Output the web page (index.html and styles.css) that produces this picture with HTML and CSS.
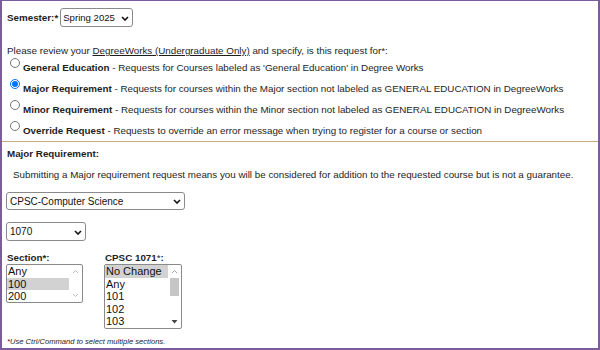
FILE: index.html
```html
<!DOCTYPE html>
<html lang="en">
<head>
    <meta charset="UTF-8">
    <title>Override Request</title>
    <link rel="stylesheet" href="styles.css">
</head>
<body>
    <div class="frame">
        <div class="row semester">
            <label class="bold" for="semester">Semester:*</label>
            <span class="pick">
                <select id="semester" class="sel sel-semester">
                    <option>Spring 2025</option>
                </select>
                <svg class="chev" width="8" height="5" viewBox="0 0 8 5"><path d="M1 1 L4 4 L7 1" fill="none" stroke="#111" stroke-width="1.6"/></svg>
            </span>
        </div>

        <p class="intro">Please review your <a href="#">DegreeWorks (Undergraduate Only)</a> and specify, is this request for*:</p>

        <div class="choices">
            <label class="choice"><input type="radio" name="kind"><b>General Education</b> - Requests for Courses labeled as 'General Education' in Degree Works</label>
            <label class="choice"><input type="radio" name="kind" checked><b>Major Requirement</b> - Requests for courses within the Major section not labeled as GENERAL EDUCATION in DegreeWorks</label>
            <label class="choice"><input type="radio" name="kind"><b>Minor Requirement</b> - Requests for courses within the Minor section not labeled as GENERAL EDUCATION in DegreeWorks</label>
            <label class="choice"><input type="radio" name="kind"><b>Override Request</b> - Requests to override an error message when trying to register for a course or section</label>
        </div>

        <div class="major">
            <h2 class="bold">Major Requirement:</h2>
            <p class="note">Submitting a Major requirement request means you will be considered for addition to the requested course but is not a guarantee.</p>

            <span class="pick pick-subject">
                <select class="sel sel-subject">
                    <option>CPSC-Computer Science</option>
                </select>
                <svg class="chev" width="8" height="5" viewBox="0 0 8 5"><path d="M1 1 L4 4 L7 1" fill="none" stroke="#111" stroke-width="1.6"/></svg>
            </span>
            <span class="pick pick-course">
                <select class="sel sel-course">
                    <option>1070</option>
                </select>
                <svg class="chev" width="8" height="5" viewBox="0 0 8 5"><path d="M1 1 L4 4 L7 1" fill="none" stroke="#111" stroke-width="1.6"/></svg>
            </span>

            <div class="lists">
                <div class="list-group">
                    <label>Section*:</label>
                    <div class="listbox list-section" role="listbox">
                        <div class="options">
                            <div class="opt">Any</div>
                            <div class="opt picked">100</div>
                            <div class="opt">200</div>
                        </div>
                        <div class="scrollbar">
                            <svg class="arrow" width="7" height="5" viewBox="0 0 7 5"><path d="M1 4 L3.5 1.5 L6 4" fill="none" stroke="#b9b9b9" stroke-width="1"/></svg>
                            <div class="track"></div>
                            <svg class="arrow" width="7" height="5" viewBox="0 0 7 5"><path d="M1 1 L3.5 3.5 L6 1" fill="none" stroke="#b9b9b9" stroke-width="1"/></svg>
                        </div>
                    </div>
                </div>
                <div class="list-group">
                    <label>CPSC 1071<span class="star">*</span>:</label>
                    <div class="listbox list-alt" role="listbox">
                        <div class="options">
                            <div class="opt picked">No Change</div>
                            <div class="opt">Any</div>
                            <div class="opt">101</div>
                            <div class="opt">102</div>
                            <div class="opt">103</div>
                        </div>
                        <div class="scrollbar">
                            <svg class="arrow" width="7" height="5" viewBox="0 0 7 5"><path d="M1 4 L3.5 1.5 L6 4" fill="none" stroke="#a8a8a8" stroke-width="1"/></svg>
                            <div class="track"><div class="thumb"></div></div>
                            <svg class="arrow" width="7" height="5" viewBox="0 0 7 5"><path d="M0.5 1 L6.5 1 L3.5 4.5 Z" fill="#444"/></svg>
                        </div>
                    </div>
                </div>
            </div>

            <p class="hint">*Use Ctrl/Command to select multiple sections.</p>
        </div>
    </div>
</body>
</html>
```

FILE: styles.css
```css
html, body {
    margin: 0;
    padding: 0;
}

body {
    width: 600px;
    height: 350px;
    font-family: Arial, "Liberation Sans", sans-serif;
    font-size: 9.8px;
    line-height: 13px;
    color: #1e1e1e;
    background: #fff;
}

.frame {
    box-sizing: border-box;
    width: 600px;
    height: 350px;
    border: 2px solid #7b5c9c;
    border-top-width: 1px;
    overflow: hidden;
    padding: 7px 0 0 4px;
}

.bold {
    font-weight: bold;
}

.row {
    display: flex;
    align-items: center;
    gap: 2px;
    height: 19px;
    padding-left: 1px;
}

/* selects with a drawn chevron */
.pick {
    position: relative;
    display: inline-block;
}

.pick-subject,
.pick-course {
    display: block;
    width: max-content;
}

.chev {
    position: absolute;
    right: 4px;
    top: 50%;
    margin-top: -2px;
    pointer-events: none;
}

.sel {
    appearance: none;
    -webkit-appearance: none;
    display: block;
    box-sizing: border-box;
    font-family: Arial, "Liberation Sans", sans-serif;
    font-size: 10px;
    color: #111;
    height: 19px;
    border: 1px solid #8a8a8a;
    border-radius: 3px;
    background: #fff;
    padding: 0 13px 0 3px;
    margin: 0;
}

.sel-semester {
    width: 73px;
    font-size: 9.6px;
    padding-left: 2px;
}

.intro {
    margin: 17px 0 0 1px;
}

.intro a {
    color: #1e1e1e;
}

/* radio choices, separator under them */
.choices {
    margin-left: -4px;
    border-bottom: 1px solid #c9ab82;
}

.choice {
    display: block;
    height: 21px;
    line-height: 21px;
    padding-left: 6px;
    white-space: nowrap;
}

.choice input {
    margin: 0 3px 0 2px;
    width: 10px;
    height: 10px;
    vertical-align: 3px;
}

.major h2 {
    font-size: 9.8px;
    line-height: 13px;
    margin: 5px 0 0 1px;
}

.note {
    margin: 8px 0 0 7px;
}

.pick-subject {
    margin-top: 11px;
}

.sel-subject {
    width: 179px;
    height: 18px;
}

.pick-course {
    margin-top: 12px;
}

.sel-course {
    width: 80px;
}

.lists {
    display: flex;
    gap: 21px;
    margin-top: 11px;
}

.list-group {
    display: flex;
    flex-direction: column;
}

.list-group label {
    font-weight: bold;
    line-height: 12px;
    padding-left: 1px;
}

.list-group .star {
    font-weight: normal;
}

/* fake listbox with old style scrollbar */
.listbox {
    display: flex;
    box-sizing: border-box;
    border: 1px solid #8a8a8a;
    border-radius: 2px;
    background: #fff;
    font-size: 11px;
    line-height: 12.5px;
    color: #111;
    overflow: hidden;
}

.list-section {
    width: 77px;
    height: 39px;
}

.list-alt {
    width: 78px;
    height: 65px;
}

.options {
    flex: 1;
}

.opt {
    padding-left: 1px;
}

.opt.picked {
    background: #d2d2d2;
}

.scrollbar {
    width: 13px;
    display: flex;
    flex-direction: column;
    align-items: center;
    padding: 4px 0;
    box-sizing: border-box;
}

.scrollbar .arrow {
    display: block;
}

.track {
    flex: 1;
    width: 100%;
    padding: 4px 2px 0;
    box-sizing: border-box;
}

.thumb {
    height: 18px;
    background: #c6c6c6;
}

.hint {
    font-size: 7.6px;
    font-style: italic;
    line-height: 10px;
    margin: 8px 0 0 1px;
}
```
